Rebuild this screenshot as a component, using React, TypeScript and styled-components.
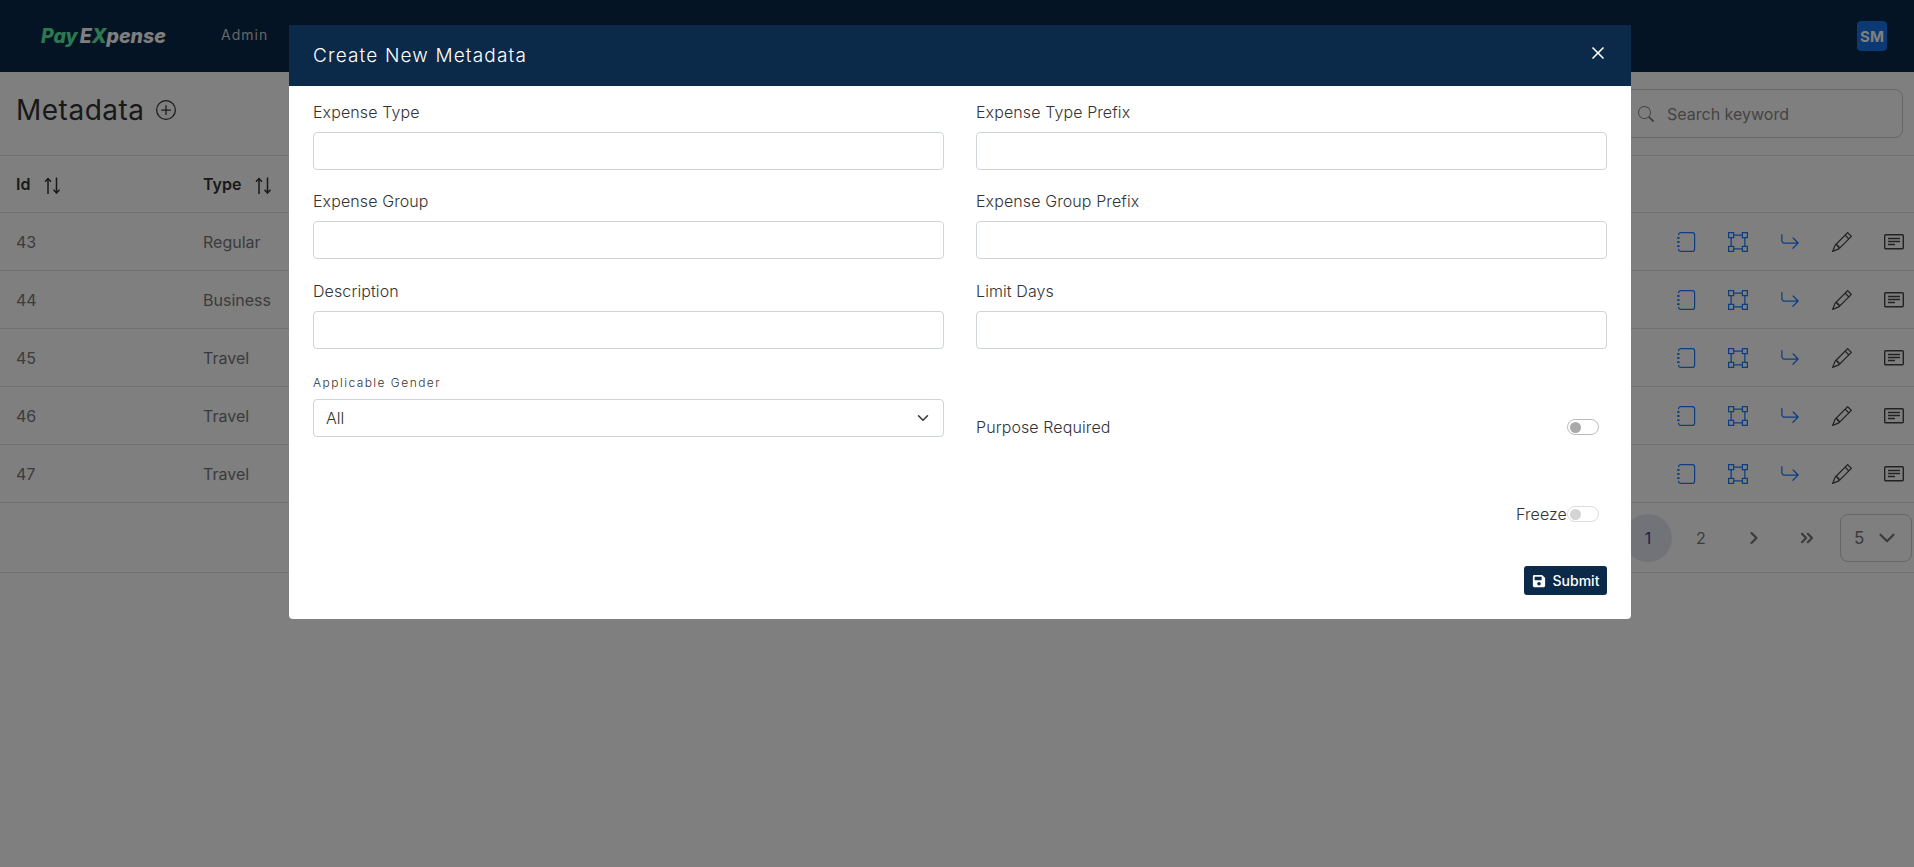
import { BsArrowReturnRight, BsBoundingBox, BsPencil, BsPlusCircle, BsSearch } from "react-icons/bs";
import { FaSave } from "react-icons/fa";
import { FiChevronDown, FiChevronRight, FiChevronsRight, FiX } from "react-icons/fi";
import styled, { createGlobalStyle } from "styled-components";

const GlobalStyle = createGlobalStyle`
  html, body {
    margin: 0;
    background: #fff;
    font-family: Inter, "Liberation Sans", sans-serif;
    color: #444;
  }
  * {
    box-sizing: border-box;
  }
`;

const Page = styled.div`
  min-height: 100vh;
`;

const NavBar = styled.nav`
  height: 72px;
  background: #0b2949;
  display: flex;
  align-items: center;
  padding: 0 27px 0 41px;
`;

const Logo = styled.div`
  width: 180px;
  font-size: 19.5px;
  font-weight: 800;
  font-style: italic;
  color: #fff;
  white-space: nowrap;
  span {
    color: #5cf0a2;
  }
  span:first-child {
    margin-right: 2px;
  }
`;

const NavLink = styled.a`
  font-size: 14px;
  letter-spacing: 1px;
  color: #ccc;
  margin-bottom: 4px;
`;

const Avatar = styled.div`
  margin-left: auto;
  width: 30px;
  height: 30px;
  border-radius: 4px;
  background: #1472e6;
  color: #fff;
  font-size: 15px;
  font-weight: 700;
  display: flex;
  align-items: center;
  justify-content: center;
`;

const TitleBar = styled.div`
  height: 84px;
  display: flex;
  align-items: center;
  justify-content: space-between;
  padding: 0 11px 0 16px;
  border-bottom: 1px solid #e0e0e0;
`;

const TitleGroup = styled.div`
  display: flex;
  align-items: center;
  gap: 11px;
  margin-bottom: 8px;
  color: #333;
`;

const Title = styled.h1`
  margin: 0;
  font-size: 28px;
  font-weight: 400;
  line-height: 36px;
  letter-spacing: 0.5px;
  color: #333;
`;

const SearchBox = styled.div`
  width: 290px;
  height: 49px;
  border: 1px solid #ccc;
  border-radius: 8px;
  display: flex;
  align-items: center;
  gap: 13px;
  padding-left: 24px;
  font-size: 16px;
  color: #888;
`;

const Row = styled.div<{ $height: number }>`
  height: ${(p) => p.$height}px;
  display: grid;
  grid-template-columns: 187px 1fr auto;
  align-items: center;
  padding: 0 10px 0 16px;
  border-bottom: 1px solid #e0e0e0;
  font-size: 16px;
  color: #777;
`;

const HeadCell = styled.div`
  display: flex;
  align-items: center;
  gap: 14px;
  font-weight: 600;
  color: #333;
  svg {
    margin-top: 3px;
  }
`;

const Actions = styled.div`
  display: flex;
  gap: 32px;
`;

const ActionIcon = styled.span<{ $blue?: boolean }>`
  width: 20px;
  height: 20px;
  display: flex;
  color: ${(p) => (p.$blue ? "#1c7cff" : "#444")};
`;

const Pagination = styled.div`
  height: 70px;
  display: flex;
  align-items: center;
  justify-content: flex-end;
  padding-right: 2px;
  border-bottom: 1px solid #e0e0e0;
  color: #777;
`;

const PageButton = styled.div<{ $active?: boolean }>`
  width: 48px;
  height: 48px;
  margin-right: 5px;
  border-radius: 50%;
  display: flex;
  align-items: center;
  justify-content: center;
  font-size: 16px;
  background: ${(p) => (p.$active ? "#e3e7f2" : "transparent")};
  color: ${(p) => (p.$active ? "#2a4a9a" : "#777")};
`;

const PageSize = styled.div`
  width: 72px;
  height: 48px;
  margin-left: 4px;
  border: 1px solid #ccc;
  border-radius: 8px;
  display: flex;
  align-items: center;
  justify-content: space-between;
  padding: 0 11px 0 13px;
  font-size: 17px;
`;

const Backdrop = styled.div`
  position: fixed;
  inset: 0;
  background: rgba(0, 0, 0, 0.5);
`;

const Modal = styled.div`
  position: fixed;
  left: 289px;
  top: 25px;
  width: 1342px;
  height: 594px;
  background: #fff;
  border-radius: 0 0 4px 4px;
  overflow: hidden;
`;

const ModalHeader = styled.div`
  height: 61px;
  background: #0b2949;
  color: #fff;
  display: flex;
  align-items: center;
  justify-content: space-between;
  padding: 0 23px 0 24px;
`;

const ModalTitle = styled.div`
  font-size: 19px;
  font-weight: 300;
  letter-spacing: 1.15px;
`;

const CloseIcon = styled.span`
  display: flex;
  margin: -6px 0 0;
  font-size: 20px;
`;

const ModalBody = styled.form`
  padding: 13.75px 24px 0;
`;

const FormGrid = styled.div`
  display: grid;
  grid-template-columns: 631px 631px;
  column-gap: 32px;
  row-gap: 19.5px;
`;

const Field = styled.div<{ $top?: number }>`
  padding-top: ${(p) => p.$top ?? 0}px;
`;

const Label = styled.label`
  display: block;
  font-size: 16px;
  line-height: 24px;
  font-weight: 300;
  color: #333;
  margin-bottom: 8px;
  letter-spacing: 0.1px;
`;

const SmallLabel = styled.label`
  display: block;
  font-size: 12px;
  line-height: 16px;
  letter-spacing: 1.45px;
  font-weight: 300;
  color: #333;
  margin-bottom: 8px;
`;

const TextInput = styled.input`
  display: block;
  width: 100%;
  height: 38px;
  border: 1px solid #ced4da;
  border-radius: 4px;
  background: #fff;
  outline: none;
`;

const SelectBox = styled.div`
  height: 38px;
  border: 1px solid #ced4da;
  border-radius: 4px;
  display: flex;
  align-items: center;
  justify-content: space-between;
  padding: 0 11px 0 12px;
  font-size: 16px;
  font-weight: 300;
  color: #333;
`;

const ToggleRow = styled.div<{ $top?: number; $end?: boolean }>`
  display: flex;
  align-items: center;
  justify-content: ${(p) => (p.$end ? "flex-end" : "space-between")};
  height: 24px;
  margin-top: ${(p) => p.$top ?? 0}px;
  padding-right: 8px;
  font-size: 16px;
  font-weight: 300;
  letter-spacing: 0.1px;
  color: #333;
`;

const Toggle = styled.span<{ $disabled?: boolean }>`
  width: 32px;
  height: 16px;
  border: 1px solid #bbb;
  border-radius: 8px;
  display: flex;
  align-items: center;
  padding-left: 2px;
  opacity: ${(p) => (p.$disabled ? 0.5 : 1)};
  &::before {
    content: "";
    width: 11px;
    height: 11px;
    border-radius: 50%;
    background: #aaa;
  }
`;

const Footer = styled.div`
  display: flex;
  justify-content: flex-end;
  margin-top: 40px;
`;

const SubmitButton = styled.button`
  width: 83px;
  height: 29px;
  border: 0;
  border-radius: 3px;
  background: #0b2949;
  color: #fff;
  font-family: inherit;
  font-size: 14px;
  font-weight: 500;
  display: flex;
  align-items: center;
  justify-content: center;
  gap: 7px;
  padding: 0;
`;

const SortIcon = () => (
  <svg width="17" height="17" viewBox="0 0 17 17" fill="none" stroke="currentColor" strokeWidth="1.5">
    <path d="M4 17V1.5M1 4.8L4 1.5L7 4.8" />
    <path d="M12.5 0.5V16M9.5 12.7L12.5 16L15.5 12.7" />
  </svg>
);

const NotebookIcon = () => (
  <svg width="20" height="20" viewBox="0 0 20 20" fill="none" stroke="currentColor" strokeWidth="1.2">
    <path d="M2.6 3.2V2.8C2.6 1.6 3.5 0.7 4.7 0.7H16.3C17.6 0.7 18.6 1.7 18.6 3V17.2C18.6 18.5 17.6 19.4 16.3 19.4H4.7C3.5 19.4 2.6 18.5 2.6 17.3V16.8" />
    <path d="M2.6 5.2V6.6M2.6 9.2V10.8M2.6 13.4V14.8" />
    <path d="M1 6H3.6M1 10H3.6M1 14.2H3.6" strokeWidth="1.4" />
  </svg>
);

const NoteIcon = () => (
  <svg width="20" height="20" viewBox="0 0 20 20" fill="none" stroke="currentColor">
    <rect x="0.7" y="2.7" width="18.6" height="14" rx="1" strokeWidth="1.4" />
    <path d="M4 6.5H16M4 9.5H16M4 12.5H11" strokeWidth="1.4" />
  </svg>
);

const rows = [
  { id: 43, type: "Regular" },
  { id: 44, type: "Business" },
  { id: 45, type: "Travel" },
  { id: 46, type: "Travel" },
  { id: 47, type: "Travel" }
];

const App = () => {
  return (
    <Page>
      <GlobalStyle />
      <NavBar>
        <Logo>
          <span>Pay</span>E<span>X</span>pense
        </Logo>
        <NavLink>Admin</NavLink>
        <Avatar>SM</Avatar>
      </NavBar>
      <TitleBar>
        <TitleGroup>
          <Title>Metadata</Title>
          <BsPlusCircle size={20} />
        </TitleGroup>
        <SearchBox>
          <BsSearch size={16} />
          Search keyword
        </SearchBox>
      </TitleBar>
      <Row $height={57}>
        <HeadCell>
          Id <SortIcon />
        </HeadCell>
        <HeadCell>
          Type <SortIcon />
        </HeadCell>
      </Row>
      {rows.map((row) => (
        <Row key={row.id} $height={58}>
          <div>{row.id}</div>
          <div>{row.type}</div>
          <Actions>
            <ActionIcon $blue>
              <NotebookIcon />
            </ActionIcon>
            <ActionIcon $blue>
              <BsBoundingBox size={20} />
            </ActionIcon>
            <ActionIcon $blue>
              <BsArrowReturnRight size={20} />
            </ActionIcon>
            <ActionIcon>
              <BsPencil size={20} />
            </ActionIcon>
            <ActionIcon>
              <NoteIcon />
            </ActionIcon>
          </Actions>
        </Row>
      ))}
      <Pagination>
        <PageButton $active>1</PageButton>
        <PageButton>2</PageButton>
        <PageButton>
          <FiChevronRight size={20} strokeWidth={2.6} />
        </PageButton>
        <PageButton>
          <FiChevronsRight size={20} strokeWidth={2.6} />
        </PageButton>
        <PageSize>
          5 <FiChevronDown size={26} />
        </PageSize>
      </Pagination>

      <Backdrop />
      <Modal>
        <ModalHeader>
          <ModalTitle>Create New Metadata</ModalTitle>
          <CloseIcon>
            <FiX />
          </CloseIcon>
        </ModalHeader>
        <ModalBody>
          <FormGrid>
            <Field>
              <Label>Expense Type</Label>
              <TextInput />
            </Field>
            <Field>
              <Label>Expense Type Prefix</Label>
              <TextInput />
            </Field>
            <Field>
              <Label>Expense Group</Label>
              <TextInput />
            </Field>
            <Field>
              <Label>Expense Group Prefix</Label>
              <TextInput />
            </Field>
            <Field>
              <Label>Description</Label>
              <TextInput />
            </Field>
            <Field>
              <Label>Limit Days</Label>
              <TextInput />
            </Field>
            <Field $top={7}>
              <SmallLabel>Applicable Gender</SmallLabel>
              <SelectBox>
                All <FiChevronDown size={18} />
              </SelectBox>
            </Field>
            <ToggleRow $top={47}>
              Purpose Required
              <Toggle />
            </ToggleRow>
          </FormGrid>
          <ToggleRow $top={63} $end>
            Freeze
            <Toggle $disabled />
          </ToggleRow>
          <Footer>
            <SubmitButton type="button">
              <FaSave size={14} />
              Submit
            </SubmitButton>
          </Footer>
        </ModalBody>
      </Modal>
    </Page>
  );
};

export default App;
